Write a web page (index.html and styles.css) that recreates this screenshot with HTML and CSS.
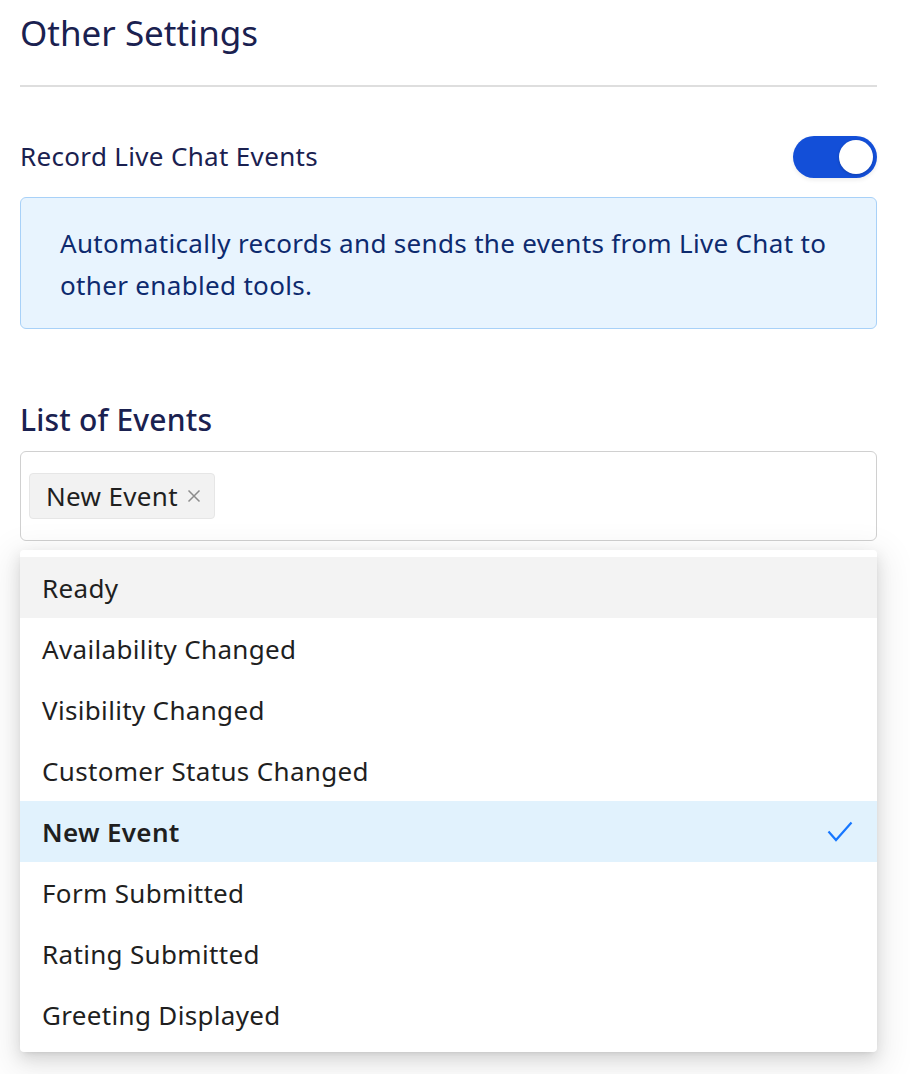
FILE: index.html
```html
<!DOCTYPE html>
<html lang="en">
<head>
<meta charset="utf-8">
<title>Other Settings</title>
<link rel="stylesheet" href="styles.css">
</head>
<body>
<div class="page">
  <h1 class="title">Other Settings</h1>
  <hr class="divider">
  <div class="setting-row">
    <span class="setting-label">Record Live Chat Events</span>
    <span class="toggle on"><span class="knob"></span></span>
  </div>
  <div class="info-box">Automatically records and sends the events from Live Chat to other enabled tools.</div>

  <h2 class="section-title">List of Events</h2>
  <div class="select-box">
    <span class="tag">New Event
      <svg class="tag-close" width="14" height="14" viewBox="0 0 14 14"><path d="M1.5 1.5 L12.5 12.5 M12.5 1.5 L1.5 12.5" stroke="#8c8c8c" stroke-width="1.5" fill="none"/></svg>
    </span>
  </div>
  <ul class="dropdown">
    <li class="option hover">Ready</li>
    <li class="option">Availability Changed</li>
    <li class="option">Visibility Changed</li>
    <li class="option">Customer Status Changed</li>
    <li class="option selected">New Event
      <svg class="check" width="26" height="21" viewBox="0 0 26 21"><polyline points="1.5,10.5 9,19 24.5,1.5" fill="none" stroke="#1677ff" stroke-width="2.2"/></svg>
    </li>
    <li class="option">Form Submitted</li>
    <li class="option">Rating Submitted</li>
    <li class="option">Greeting Displayed</li>
  </ul>
</div>
</body>
</html>
```
FILE: styles.css
```css
html, body {
  margin: 0;
  padding: 0;
  background: #ffffff;
}
body {
  font-family: "Noto Sans", "Open Sans", sans-serif;
  color: #1f1f1f;
}
.page {
  width: 857px;
  margin-left: 20px;
  padding-top: 9px;
  padding-bottom: 40px;
}
.title {
  margin: 0;
  font-size: 35px;
  line-height: 48px;
  font-weight: 400;
  color: #1a2150;
}
.divider {
  margin: 28px 0 0 0;
  border: 0;
  border-top: 2px solid #dedede;
  height: 0;
}
.setting-row {
  margin-top: 49px;
  display: flex;
  align-items: center;
  justify-content: space-between;
  height: 42px;
}
.setting-label {
  font-size: 26px;
  line-height: 40px;
  letter-spacing: 0.33px;
  color: #1a2150;
  margin-top: -3px;
}
.toggle {
  width: 84px;
  height: 42px;
  border-radius: 21px;
  background: #134fd8;
  position: relative;
  box-shadow: 0 2px 4px rgba(0,0,0,0.08);
}
.toggle .knob {
  position: absolute;
  top: 4px;
  right: 4px;
  width: 34px;
  height: 34px;
  border-radius: 50%;
  background: #ffffff;
  box-shadow: 0 1px 3px rgba(0,0,0,0.2);
}
.info-box {
  margin-top: 19px;
  background: #e8f4fe;
  border: 1px solid #a8d1f8;
  border-radius: 6px;
  padding: 24px 30px 22px 39px;
  font-size: 26px;
  line-height: 42px;
  letter-spacing: 0.33px;
  color: #0d2a6e;
}
.section-title {
  margin: 71px 0 0 0;
  font-size: 30px;
  line-height: 40px;
  font-weight: 500;
  letter-spacing: 0.2px;
  color: #1a2150;
}
.select-box {
  margin-top: 11px;
  border: 1px solid #d0d0d0;
  border-radius: 6px;
  padding: 21px 8px 21px 8px;
  display: flex;
  align-items: center;
}
.tag {
  display: inline-flex;
  align-items: center;
  gap: 9px;
  height: 44px;
  padding: 0 13px 0 16px;
  background: #f2f2f2;
  border: 1px solid #e6e6e6;
  border-radius: 4px;
  font-size: 26px;
  line-height: 44px;
  letter-spacing: 0.33px;
  color: #1f1f1f;
}
.tag-close {
  display: block;
}
.dropdown {
  list-style: none;
  margin: 9px 0 0 0;
  padding: 7px 0 7px 0;
  background: #ffffff;
  border-radius: 4px;
  box-shadow: 0 6px 16px 0 rgba(0,0,0,0.12), 0 3px 6px -4px rgba(0,0,0,0.16), 0 10px 34px 10px rgba(0,0,0,0.07);
}
.option {
  height: 61px;
  display: flex;
  align-items: center;
  justify-content: space-between;
  padding: 0 24px 0 22px;
  font-size: 26px;
  letter-spacing: 0.33px;
  color: #1f1f1f;
}
.option.hover {
  background: #f3f3f3;
}
.option.selected {
  background: #e1f2fd;
  font-weight: 600;
}
.check {
  display: block;
}
```
